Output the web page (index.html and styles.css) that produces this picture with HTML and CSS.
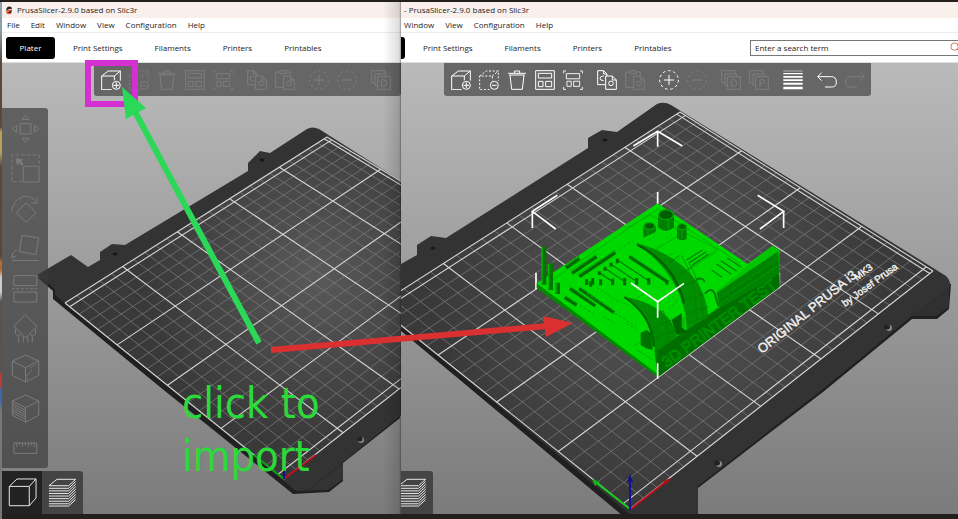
FILE: index.html
```html
<!DOCTYPE html>
<html lang="en">
<head>
<meta charset="utf-8">
<title>PrusaSlicer import</title>
<link rel="stylesheet" href="styles.css">
</head>
<body>
<svg class="sprite" aria-hidden="true">
  <symbol id="i-add" viewBox="0 0 60 60"><path d="M32 59H2V18H40V31M2 18L22 3H58V32M40 18L58 3"/><circle cx="46" cy="46" r="12"/><path d="M46 37v18M37 46h18"/></symbol>
  <symbol id="i-del" viewBox="0 0 60 60"><path stroke-dasharray="6 5" d="M32 59H2V18H40V31M2 18L22 3H58V32M40 18L58 3"/><circle cx="46" cy="46" r="12"/><path d="M39 46h14"/></symbol>
  <symbol id="i-trash" viewBox="0 0 60 60"><path d="M3 10H57M22 9V3H38V9M7 15H53M9 15L14 58H46L51 15"/></symbol>
  <symbol id="i-arr" viewBox="0 0 60 60"><path d="M2 2H58V58H2ZM10 10H50V24H10ZM10 34H24V50H10ZM32 34H50V50H32Z"/></symbol>
  <symbol id="i-arrsel" viewBox="-3 -3 66 66"><path d="M-1 8V0H7M53 0H61V8M61 53V61H53M7 61H-1V53M8 9H52V26H8ZM10 34H24V51H10ZM32 34H52V51H32Z"/></symbol>
  <symbol id="i-copy" viewBox="0 0 60 60"><path d="M24 44H2V2H20L30 12V18M20 2V12H30M26 18H46L58 30V58H26ZM46 18V30H58"/><circle cx="42" cy="40" r="7"/><path d="M20 18Q9 18 9 25T20 32"/></symbol>
  <symbol id="i-paste" viewBox="0 0 60 60"><path d="M24 52H2V6H14M34 6H46V16M14 2H34V11H14ZM26 18H46L58 30V58H26ZM46 18V30H58"/><circle cx="42" cy="40" r="7"/></symbol>
  <symbol id="i-plus" viewBox="0 0 60 60"><circle cx="30" cy="30" r="28" stroke-dasharray="8 8"/><path d="M30 15V45M15 30H45"/></symbol>
  <symbol id="i-minus" viewBox="0 0 60 60"><circle cx="30" cy="30" r="28" stroke-dasharray="8 8"/><path d="M15 30H45"/></symbol>
  <symbol id="i-obj" viewBox="0 0 60 60"><path d="M12 38H2V2H42V12M12 12H46V18M12 12V46H20M20 20H58V58H20Z"/><path d="M32 29V49H38Q47 49 47 39T38 29Z"/></symbol>
  <symbol id="i-part" viewBox="0 0 60 60"><path d="M12 38H2V2H42V12M12 12H46V18M12 12V46H20M20 20H58V58H20Z"/><path d="M33 51V29H40Q47 29 47 35T40 41H33"/></symbol>
  <symbol id="i-lines" viewBox="0 0 60 60"><path fill="#fff" stroke="none" d="M1 2h58v2H1zM1 9h58v4H1zM1 18h58v5H1zM1 28h58v5H1zM1 38h58v6H1zM1 50h58v8H1z"/></symbol>
  <symbol id="i-undo" viewBox="0 0 60 60"><path d="M14 8L2 20L14 32M2 20H43Q58 20 58 36T43 51H24"/></symbol>
  <symbol id="i-redo" viewBox="0 0 60 60"><path d="M46 8L58 20L46 32M58 20H17Q2 20 2 36T17 51H36"/></symbol>
  <symbol id="i-move" viewBox="0 0 90 90"><path d="M28 30H62V62H28ZM45 4L56 17H34ZM45 88L56 75H34ZM3 45L17 35V57ZM87 45L73 35V57Z"/></symbol>
  <symbol id="i-scale" viewBox="0 0 90 90"><path stroke-dasharray="12 6" d="M36 86H3V3H87V36"/><path d="M38 38H87V87H38Z"/><path fill="currentColor" d="M16 14L36 18L29 22L38 31L33 35L25 26L20 34Z"/></symbol>
  <symbol id="i-rot" viewBox="0 0 90 90"><path d="M47 28L78 58L47 88L16 58ZM3 56C4 12 50 -8 77 22M81 10V28H63"/></symbol>
  <symbol id="i-face" viewBox="0 0 90 90"><path d="M34 4L86 12L77 64L26 54ZM3 82H87M4 74Q2 55 18 50M5 60L3 74L16 68"/></symbol>
  <symbol id="i-cut" viewBox="0 0 90 90"><path d="M9 5H80V36H9ZM9 56H80V87H9Z"/><path stroke-dasharray="9 5" d="M3 46H87"/></symbol>
  <symbol id="i-sup" viewBox="0 0 90 90"><path d="M45 2L81 38L45 74L9 38ZM14 46V62L24 70V88M24 68L32 62M76 46V62L66 70V88M66 68L58 62M38 68V88M52 68V88"/></symbol>
  <symbol id="i-seam" viewBox="0 0 90 90"><path d="M45 3L86 22V66L45 87L4 66V22ZM4 22L45 42L86 22M45 42V87"/><path stroke-dasharray="7 4" d="M76 34L62 42V56L50 64V80"/></symbol>
  <symbol id="i-mmu" viewBox="0 0 90 90"><path d="M45 3L86 22V66L45 87L4 66V22ZM4 22L45 42L86 22M45 42V87M4 30L45 50M4 37L45 57M4 44L45 64M4 51L45 71M4 58L45 78"/></symbol>
  <symbol id="i-rule" viewBox="0 0 90 90"><path d="M9 28H80V60H9ZM18 28V40M27 28V36M36 28V40M45 28V36M54 28V40M63 28V36M72 28V40"/></symbol>
  <symbol id="i-cube" viewBox="0 0 90 90"><path d="M4 26H66V86H4ZM4 26L28 3H87L66 26M87 3V62L66 86"/></symbol>
  <symbol id="i-layers" viewBox="0 0 90 90"><path d="M3 24L28 4H86L64 24ZM3 32H64L86 11M3 40H64L86 19M3 48H64L86 27M3 56H64L86 35M3 64H64L86 43M3 72H64L86 51M3 80H64L86 59M3 87H64L86 67"/></symbol>
</svg>

<main class="desktop">
  <section class="window window-left">
    <header class="titlebar">
      <svg class="logo" viewBox="0 0 20 24" aria-hidden="true"><path fill="#222" d="M3 9Q3 2 11 1Q18 1 18 8Q10 6 3 14Z"/><path fill="#e8582a" d="M2 15Q9 8 18 10Q18 22 9 22Q3 22 2 15Z"/><path fill="#222" d="M7 17L17 12L15 19Z"/></svg>
      <span>PrusaSlicer-2.9.0 based on Slic3r</span>
    </header>
    <nav class="menubar"><a href="#">File</a><a href="#">Edit</a><a href="#">Window</a><a href="#">View</a><a href="#">Configuration</a><a href="#">Help</a></nav>
    <nav class="tabs"><button class="tab-active">Plater</button><a href="#">Print Settings</a><a href="#">Filaments</a><a href="#">Printers</a><a href="#">Printables</a></nav>
    <div class="canvas">
      <svg class="scene" viewBox="2 63 399 451" preserveAspectRatio="xMinYMin slice" aria-hidden="true">
        <defs><radialGradient id="g1" gradientUnits="userSpaceOnUse" cx="315" cy="275" r="170"><stop offset="0" stop-color="#595959"/><stop offset="1" stop-color="#393939"/></radialGradient></defs>
        <path fill="#202020" d="M37 277L53 291V299L160 387L293 494L329 492L343 481V463L400 418V300L80 280Z"/>
        <path fill="#333" d="M37 275L71 255L88 267L100 260V252L112 244L125 245L248 171V163L260 151L270 153L307 129Q312 126 319 129L420 193V400L343 462V479L328 490L296 491L160 380L55 295V289Z"/>
        <ellipse cx="115" cy="254" rx="2.500" ry="1.500" fill="#181818"/><ellipse cx="262" cy="160" rx="2.500" ry="1.500" fill="#181818"/><path d="M343 463L305 492" stroke="#292929"/>
        <ellipse cx="361" cy="440" rx="3" ry="3" fill="#8c8c8c"/><ellipse cx="360" cy="439" rx="2.500" ry="2.500" fill="#222"/>
        <g class="bed" data-quad="284,479 550,271 327,137 65,303" data-fill="url(#g1)"></g>
        <path class="axis" stroke="#b80d18" d="M285 478L316 455"/><path class="axis" stroke="#0c9c1a" d="M284 479L254 455"/><path class="axis" stroke="#10108c" d="M284 479V453"/>
      </svg>
      <div class="toolbar">
        <div class="group">
          <button aria-label="Add"><svg><use href="#i-add"/></svg></button>
          <button disabled aria-label="Delete"><svg><use href="#i-del"/></svg></button>
          <button disabled aria-label="Delete all"><svg><use href="#i-trash"/></svg></button>
          <button disabled aria-label="Arrange"><svg><use href="#i-arr"/></svg></button>
          <button disabled aria-label="Arrange selection"><svg><use href="#i-arrsel"/></svg></button>
        </div>
        <div class="group">
          <button disabled aria-label="Copy"><svg><use href="#i-copy"/></svg></button>
          <button disabled aria-label="Paste"><svg><use href="#i-paste"/></svg></button>
        </div>
        <div class="group">
          <button disabled aria-label="Add instance"><svg><use href="#i-plus"/></svg></button>
          <button disabled aria-label="Remove instance"><svg><use href="#i-minus"/></svg></button>
        </div>
        <div class="group">
          <button disabled aria-label="Split to objects"><svg><use href="#i-obj"/></svg></button>
        </div>
      </div>
      <div class="gizmos">
        <button disabled aria-label="Move"><svg><use href="#i-move"/></svg></button>
        <button disabled aria-label="Scale"><svg><use href="#i-scale"/></svg></button>
        <button disabled aria-label="Rotate"><svg><use href="#i-rot"/></svg></button>
        <button disabled aria-label="Place on face"><svg><use href="#i-face"/></svg></button>
        <button disabled aria-label="Cut"><svg><use href="#i-cut"/></svg></button>
        <button disabled aria-label="Supports"><svg><use href="#i-sup"/></svg></button>
        <button disabled aria-label="Seam"><svg><use href="#i-seam"/></svg></button>
        <button disabled aria-label="Layers painting"><svg><use href="#i-mmu"/></svg></button>
        <button disabled aria-label="Measure"><svg><use href="#i-rule"/></svg></button>
      </div>
      <div class="views">
        <button class="view-active" aria-label="3D view"><svg><use href="#i-cube"/></svg></button>
        <button aria-label="Preview"><svg><use href="#i-layers"/></svg></button>
      </div>
    </div>
  </section>

  <section class="window window-right">
    <header class="titlebar"><span>- PrusaSlicer-2.9.0 based on Slic3r</span></header>
    <nav class="menubar"><a href="#">Window</a><a href="#">View</a><a href="#">Configuration</a><a href="#">Help</a></nav>
    <nav class="tabs">
      <button class="tab-active tab-cut" aria-label="Plater"></button><a href="#">Print Settings</a><a href="#">Filaments</a><a href="#">Printers</a><a href="#">Printables</a>
      <div class="search"><input type="text" value="Enter a search term" aria-label="Search"><svg viewBox="0 0 12 12" aria-hidden="true"><circle cx="5" cy="5" r="4"/><path d="M8 8L11 11"/></svg></div>
    </nav>
    <div class="canvas">
      <svg class="scene" viewBox="401 63 557 451" preserveAspectRatio="xMinYMin slice" aria-hidden="true">
        <defs><radialGradient id="g2" gradientUnits="userSpaceOnUse" cx="660" cy="280" r="230"><stop offset="0" stop-color="#575757"/><stop offset="1" stop-color="#393939"/></radialGradient></defs>
        <path fill="#202020" d="M390 322L460 380L623 516H698V488L823 392L912 319H937L949 309L951 284L700 250Z"/>
        <path fill="#333" d="M380 276L401 264L417 255V245L431 236L446 238L588 148V138L602 130L617 132L657 104Q664 101 671 105L946 276Q952 282 949 288L912 316L823 389L698 486V516H632L460 374L380 310Z"/>
        <path fill="#303030" d="M912 316L949 288V307L936 316Z"/>
        <ellipse cx="605" cy="140" rx="2.500" ry="1.500" fill="#181818"/><ellipse cx="433" cy="248" rx="2.500" ry="1.500" fill="#181818"/>
        <ellipse cx="889" cy="328" rx="3" ry="3" fill="#8c8c8c"/><ellipse cx="887" cy="327" rx="3" ry="2.500" fill="#222"/>
        <ellipse cx="719" cy="464" rx="3" ry="3" fill="#8c8c8c"/><ellipse cx="717" cy="463" rx="3" ry="2.500" fill="#222"/>
        <g class="bed" data-quad="630,509 933,271 680,112 377,306" data-fill="url(#g2)"></g>
        <g class="bed-label"><text font-size="13" transform="translate(762 354) rotate(-39)">ORIGINAL PRUSA i3</text><text font-size="10" transform="translate(857 281) rotate(-37)">MK3</text><text font-size="10" transform="translate(845 307) rotate(-36)">by Josef Prusa</text></g>
        <path class="axis" stroke="#c00d18" d="M631 509L668 480"/><path class="axis" stroke="#10cc18" d="M630 509L594 481"/><path class="axis" stroke="#1212a0" d="M630 510V478"/><path fill="#12128c" d="M627 482L630 474L633 482Z"/><path fill="#10b418" d="M592 479L600 482L595 486Z"/><path fill="#b00d18" d="M671 478L667 484L663 481Z"/>
        <g transform="translate(520 120) scale(.3333)">
          <path class="bracket" d="M340 78L413 34L487 78M413 34V80M112 226L37 274L107 327M37 274V324M713 226L791 274L720 327M791 274V324M413 216V262M48 458V508M778 458V505"/>
          <path fill="#008c00" d="M50 490L413 752V772L50 505Z"/>
          <path fill="#00d900" d="M50 490L413 250L683 432L757 378L778 390V500L413 762Z"/>
          <path fill="none" stroke="#00b400" stroke-width="3" d="M82 490L413 266L660 430M315 327L390 285L592 388L498 452M340 680L395 642M350 690L400 720M470 350L390 400M520 440L590 395"/>
          <path fill="#00c400" d="M590 512L757 378L778 392L600 530Z"/>
          <path fill="#008300" d="M590 518L775 394L780 500L413 772L403 690L505 625L560 588L598 560Z"/>
          <path fill="#006f00" d="M413 690L560 588L778 462V500L413 772Z"/>
          <path fill="none" stroke="#009500" stroke-width="3" d="M592 538L776 414M594 556L778 436M413 690L560 588"/>
          <path fill="none" stroke="#006c00" stroke-width="3" stroke-dasharray="9 7" d="M604 540L770 430"/>
          <path fill="#008f00" d="M350 370C430 390 555 450 565 590L500 628C500 530 440 430 350 374Z"/>
          <path fill="none" stroke="#005f00" stroke-width="7" d="M352 374C430 415 475 475 492 550"/>
          <path fill="none" stroke="#007800" stroke-width="2" d="M450 425L482 405M475 465L520 440M487 500L545 475M496 540L558 520M500 580L565 560M500 610L562 590M505 425Q545 490 550 590M485 408Q528 470 530 600"/>
          <path fill="#00be00" d="M460 590L495 590V630L470 650Z"/><path fill="#006300" d="M455 600L485 580V622L500 635L470 645Z"/>
          <path fill="#008c00" d="M312 530C400 545 465 590 470 650L405 690C400 615 365 560 312 530Z"/>
          <path fill="none" stroke="#005f00" stroke-width="6" d="M313 531C365 567 397 610 402 680"/>
          <path fill="none" stroke="#007400" stroke-width="2" d="M385 590L430 572M396 625L455 600M402 655L468 630M430 573Q445 610 445 665"/>
          <text class="emboss" font-size="47" transform="translate(440 744) rotate(-36)">3D PRINTER TEST</text>
          <path fill="#007600" d="M362 638L380 630L398 642V690L380 685L362 675Z"/>
          <path stroke="#006a00" stroke-width="2" fill="none" d="M370 640V680M378 638V686M387 640V687"/>
          <path fill="#007f00" d="M414 286Q438 260 462 286V322Q438 344 414 322ZM370 318Q388 298 407 318V336L370 353ZM471 320Q486 302 500 320V357Q484 365 471 355Z"/>
          <path fill="none" stroke="#00a600" stroke-width="3" d="M445 300V330M486 330V358M384 328V345"/>
          <ellipse cx="438" cy="284" rx="22" ry="15" fill="#005e00" stroke="#00aa00" stroke-width="4"/><ellipse cx="388" cy="318" rx="16" ry="10" fill="#005e00" stroke="#00aa00" stroke-width="4"/><ellipse cx="486" cy="320" rx="13" ry="9" fill="#006900" stroke="#00aa00" stroke-width="4"/>
          <path fill="none" stroke="#006c00" stroke-width="10" d="M138 444L178 416M156 460L230 410M178 470L286 398M328 410L440 484M134 532L170 555M150 506L226 558M178 506L282 578"/>
          <path fill="none" stroke="#00a800" stroke-width="3" d="M134 438L178 408M152 452L230 402M172 464L286 390M328 404L440 478M134 526L170 549M150 499L226 552M178 500L282 572"/>
          <path fill="none" stroke="#008200" stroke-width="4" d="M292 420L392 486M272 432L352 486M255 445L316 486M238 458L278 485M575 450L606 472M590 432L634 463M602 422L650 454M622 414L664 442M500 420L548 390M508 428L558 396M516 436L566 402"/>
          <path fill="none" stroke="#006c00" stroke-width="9" d="M200 478V495M218 474V494M242 478V496M278 476V496M314 474V496M350 474V494M386 474V494M238 454V465M255 440V452M273 428V440M292 416V430M212 484V500M441 480V494"/>
          <path fill="none" stroke="#007500" stroke-width="14" d="M72 380V494M92 430V510M113 488V522"/><path fill="none" stroke="#00ba00" stroke-width="4" d="M66 380V490M86 432V506M108 490V518"/>
          <path fill="none" stroke="#00a900" stroke-width="3" stroke-dasharray="8 6" d="M386 360L404 350M412 382L430 372M438 410L460 400M300 386L340 362M200 520L250 552M230 502L300 548M285 580L350 620M250 590L290 612M440 355L455 345M460 430L480 415M340 540L375 520M310 548L340 566M445 520L475 545L440 568M180 556L225 586M320 610L350 630"/>
          <path fill="none" stroke="#007c00" stroke-width="6" d="M528 478Q548 470 554 486M556 520Q574 500 584 520Q590 545 596 558"/>
          <path class="bracket" d="M333 489L413 545L492 490M413 545V593M413 730V776"/>
        </g>
      </svg>
      <div class="toolbar">
        <div class="group">
          <button aria-label="Add"><svg><use href="#i-add"/></svg></button>
          <button aria-label="Delete"><svg><use href="#i-del"/></svg></button>
          <button aria-label="Delete all"><svg><use href="#i-trash"/></svg></button>
          <button aria-label="Arrange"><svg><use href="#i-arr"/></svg></button>
          <button aria-label="Arrange selection"><svg><use href="#i-arrsel"/></svg></button>
        </div>
        <div class="group">
          <button aria-label="Copy"><svg><use href="#i-copy"/></svg></button>
          <button disabled aria-label="Paste"><svg><use href="#i-paste"/></svg></button>
        </div>
        <div class="group">
          <button aria-label="Add instance"><svg><use href="#i-plus"/></svg></button>
          <button disabled aria-label="Remove instance"><svg><use href="#i-minus"/></svg></button>
        </div>
        <div class="group">
          <button disabled aria-label="Split to objects"><svg><use href="#i-obj"/></svg></button>
          <button disabled aria-label="Split to parts"><svg><use href="#i-part"/></svg></button>
        </div>
        <div class="group">
          <button aria-label="Variable layer height"><svg><use href="#i-lines"/></svg></button>
        </div>
        <div class="group">
          <button aria-label="Undo"><svg><use href="#i-undo"/></svg></button>
          <button disabled aria-label="Redo"><svg><use href="#i-redo"/></svg></button>
        </div>
      </div>
      <div class="views">
        <button aria-label="Preview"><svg><use href="#i-layers"/></svg></button>
      </div>
    </div>
  </section>
</main>

<div class="notes">
  <svg viewBox="0 0 958 519" preserveAspectRatio="xMinYMin meet" aria-hidden="true">
    <rect x="88" y="63" width="47" height="41" fill="none" stroke="#d530d2" stroke-width="6"/>
    <path d="M259 343L133 108" stroke="#2cd858" stroke-width="6"/><path fill="#2cd858" d="M122 87L146 108L126 119Z"/>
    <path d="M271 350L548 326" stroke="#db3030" stroke-width="6"/><path fill="#db3030" d="M573 323L543 316L546 337Z"/>
  </svg>
  <p>click to<br>import</p>
</div>
<script src="bed.js"></script>
</body>
</html>
```
FILE: styles.css
```css
* { box-sizing: border-box; }
body {
  margin: 0;
  font: 8px/12px "Open Sans", "Noto Sans", sans-serif;
  color: #1c1c1c;
  background: #231f1d;
  overflow: hidden;
}
a { color: inherit; text-decoration: none; white-space: nowrap; }
button { border: 0; padding: 0; font: inherit; color: inherit; background: none; }
.sprite { position: absolute; width: 0; height: 0; }
.desktop {
  display: grid;
  grid-template-columns: 399fr 557fr;
  height: 100vh;
  padding: 2px 0 5px 2px;
  background: linear-gradient(#8ea0a8 0 28px, #57493e 60px 125px, #b8a257 130px 150px, #55483f 165px 255px, #b86a2a 260px 268px, #ccc 275px 290px, #5b524c 300px 370px, #b83c34 372px 384px, #3c68b0 388px 398px, #777 410px) 0 2px / 2px 100% no-repeat, #231f1d;
}
.window { display: flex; flex-direction: column; min-width: 0; overflow: hidden; background: #fff; position: relative; }
.window-left::after {
  content: "";
  position: absolute;
  inset: 0 0 0 auto;
  width: 18px;
  background: linear-gradient(90deg, #0000, #0002 90%, #0006);
}
.titlebar { display: flex; align-items: center; gap: 4px; height: 16px; padding-left: 3px; background: #f9f0eb; }
.logo { width: 8px; height: 9px; }
.menubar { display: flex; align-items: center; gap: 11px; height: 15px; padding-left: 5px; border-bottom: 1px solid #eee; }
.tabs { display: flex; align-items: center; gap: 32px; height: 30px; padding-left: 4px; border-bottom: 1px solid #ddd; }
.tab-active { width: 49px; height: 22px; margin-right: -14px; border-radius: 3px; background: #000; color: #fff; }
.tab-cut { width: 4px; border-radius: 0 3px 3px 0; }
.window-right .titlebar, .window-right .menubar { padding-left: 3px; }
.window-right .tabs { padding-left: 0; }
.search { display: flex; align-items: center; width: 208px; height: 16px; margin-left: auto; border: 1px solid #777; border-right: 0; }
.search input { flex: 1; min-width: 0; border: 0; padding: 0 4px; font: inherit; color: inherit; background: none; outline: 0; }
.search svg { width: 11px; height: 11px; margin-right: -3px; fill: none; stroke: #d8693c; }
.canvas { position: relative; flex: 1; display: flex; flex-direction: column; align-items: flex-start; min-height: 0; background: linear-gradient(#bababa, #7b7b7b); }
.scene { position: absolute; inset: 0; width: 100%; height: 100%; }
.toolbar { position: relative; display: flex; gap: 6px; height: 33px; margin-left: 92px; padding: 0 2px 0 3px; border-radius: 0 0 3px 3px; background: #666; align-self: stretch; }
.window-right .toolbar { margin-left: 43px; align-self: flex-start; }
.group { display: flex; }
.toolbar button { display: grid; place-items: center; width: 28px; height: 33px; color: #fff; }
.toolbar svg { width: 20px; height: 20px; }
button svg { fill: none; stroke: currentColor; stroke-width: 3; }
.toolbar button:disabled { color: #7e7e7e; }
.gizmos { position: relative; display: flex; flex-direction: column; width: 46px; margin-top: 12px; border-radius: 0 3px 3px 0; background: #3c3c3cb0; }
.gizmos button { display: grid; place-items: center; height: 40px; color: #7c7c7c; }
.gizmos svg, .views svg { width: 29px; height: 29px; }
.views { position: relative; display: flex; margin-top: auto; height: 43px; border-radius: 0 3px 0 0; background: #444; overflow: hidden; }
.views button { display: grid; place-items: center; width: 41px; color: #eee; }
.views .view-active { width: 40px; background: #222; }
.window-right .views { width: 32px; justify-content: flex-end; }
.window-right .views button { flex: none; }
.axis { fill: none; stroke-width: 2; }
.bracket { fill: none; stroke: #fff; stroke-width: 5; }
.minor { fill: none; stroke: #7e7e7e; stroke-width: 0.7; }
.major { fill: none; stroke: #d6d6d6; stroke-width: 1.1; }
.bed-label { fill: #f2f2f2; stroke: #f2f2f2; stroke-width: 0.4; font-family: "Liberation Sans", sans-serif; }
.emboss { fill: #007000; stroke: #00a000; stroke-width: 2; font-family: "Liberation Sans", sans-serif; }
.notes { position: absolute; inset: 0; pointer-events: none; color: #2bd93a; }
.notes svg { display: block; width: 100%; }
.notes p { position: absolute; left: 182px; top: 377px; margin: 0; font-family: "DejaVu Sans Condensed", "DejaVu Sans", sans-serif; font-size: 43px; line-height: 53px; }
```
FILE: bed.js
```js
// Draws a perspective print bed grid (250 x 210 mm) into each .bed group.
const NS = "http://www.w3.org/2000/svg";

function projector([a, b, c, d]) {
  const sx = a[0] - b[0] + c[0] - d[0], sy = a[1] - b[1] + c[1] - d[1];
  const dx1 = b[0] - c[0], dx2 = d[0] - c[0], dy1 = b[1] - c[1], dy2 = d[1] - c[1];
  const det = dx1 * dy2 - dx2 * dy1;
  const g = (sx * dy2 - dx2 * sy) / det, h = (dx1 * sy - sx * dy1) / det;
  return (x, y) => {
    const u = x / 250, v = (y + 5) / 210, w = g * u + h * v + 1;
    const px = ((b[0] - a[0] + g * b[0]) * u + (d[0] - a[0] + h * d[0]) * v + a[0]) / w;
    const py = ((b[1] - a[1] + g * b[1]) * u + (d[1] - a[1] + h * d[1]) * v + a[1]) / w;
    return px.toFixed(1) + " " + py.toFixed(1);
  };
}

document.querySelectorAll(".bed").forEach((bed) => {
  const p = projector(bed.dataset.quad.split(" ").map((s) => s.split(",").map(Number)));
  const add = (cls, d, fill) => {
    const path = document.createElementNS(NS, "path");
    if (cls) path.setAttribute("class", cls);
    if (fill) path.setAttribute("fill", fill);
    path.setAttribute("d", d);
    bed.append(path);
  };
  const line = (x1, y1, x2, y2) => "M" + p(x1, y1) + "L" + p(x2, y2);
  let minor = "", major = "";
  for (let x = 0; x <= 250; x += 10) {
    if (x % 50) minor += line(x, -5, x, 205); else major += line(x, -5, x, 205);
  }
  for (let y = 0; y <= 200; y += 10) {
    if (y % 50) minor += line(0, y, 250, y); else major += line(0, y, 250, y);
  }
  major += line(0, -5, 250, -5) + line(0, 205, 250, 205) + line(247, -5, 247, 205);
  add("", "M" + p(0, -5) + "L" + p(250, -5) + "L" + p(250, 205) + "L" + p(0, 205) + "Z", bed.dataset.fill);
  add("minor", minor);
  add("major", major);
});
```
